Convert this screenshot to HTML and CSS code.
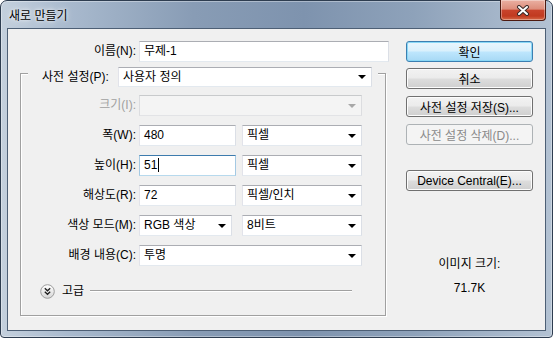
FILE: index.html
```html
<!DOCTYPE html>
<html lang="ko">
<head>
    <meta charset="utf-8">
    <title>새로 만들기</title>
    <link rel="stylesheet" href="styles.css">
</head>
<body>
    <div class="window">
        <div class="titlebar">
            <span class="title">새로 만들기</span>
            <button class="close-btn" aria-label="닫기">
                <svg width="14" height="11" viewBox="0 0 14 11">
                    <path d="M3 2 L11 9 M11 2 L3 9" stroke="#3a2a28" stroke-width="4" stroke-linecap="round" fill="none"/>
                    <path d="M3 2 L11 9 M11 2 L3 9" stroke="#fff" stroke-width="2" stroke-linecap="round" fill="none"/>
                </svg>
            </button>
        </div>

        <div class="client">
            <div class="form-area">
                <div class="name-row">
                    <label>이름(N):</label>
                    <div class="field">무제-1</div>
                </div>

                <div class="group">
                    <div class="preset-row">
                        <label>사전 설정(P):</label>
                        <div class="combo preset-combo"><span>사용자 정의</span><i class="arrow"></i></div>
                    </div>

                    <div class="grid">
                        <label class="disabled">크기(I):</label>
                        <div class="combo disabled"><span></span><i class="arrow"></i></div>

                        <label>폭(W):</label>
                        <div class="pair">
                            <div class="field num">480</div>
                            <div class="combo unit"><span>픽셀</span><i class="arrow"></i></div>
                        </div>

                        <label>높이(H):</label>
                        <div class="pair">
                            <div class="field num focused">51<span class="caret"></span></div>
                            <div class="combo unit"><span>픽셀</span><i class="arrow"></i></div>
                        </div>

                        <label>해상도(R):</label>
                        <div class="pair">
                            <div class="field num">72</div>
                            <div class="combo unit"><span>픽셀/인치</span><i class="arrow"></i></div>
                        </div>

                        <label>색상 모드(M):</label>
                        <div class="pair">
                            <div class="combo mode"><span>RGB 색상</span><i class="arrow"></i></div>
                            <div class="combo unit"><span>8비트</span><i class="arrow"></i></div>
                        </div>

                        <label>배경 내용(C):</label>
                        <div class="combo"><span>투명</span><i class="arrow"></i></div>
                    </div>

                    <div class="advanced">
                        <svg class="expand-icon" width="15" height="15" viewBox="0 0 15 15">
                            <defs>
                                <linearGradient id="btnGrad" x1="0" y1="0" x2="0" y2="1">
                                    <stop offset="0" stop-color="#ffffff"/>
                                    <stop offset="1" stop-color="#d6d6d6"/>
                                </linearGradient>
                            </defs>
                            <circle cx="7.5" cy="7.5" r="6.8" fill="url(#btnGrad)" stroke="#9c9c9c"/>
                            <path d="M4.8 4.3 L7.5 6.8 L10.2 4.3 M4.8 7.8 L7.5 10.3 L10.2 7.8" stroke="#1e1e1e" stroke-width="1.3" fill="none"/>
                        </svg>
                        <span class="advanced-label">고급</span>
                        <span class="etched-line"></span>
                    </div>
                </div>
            </div>

            <div class="side">
                <button class="btn default">확인</button>
                <button class="btn cancel">취소</button>
                <button class="btn save">사전 설정 저장(S)...</button>
                <button class="btn delete" disabled>사전 설정 삭제(D)...</button>
                <button class="btn device">Device Central(E)...</button>

                <div class="size-info">
                    <div>이미지 크기:</div>
                    <div class="size-value">71.7K</div>
                </div>
            </div>
        </div>
    </div>
</body>
</html>
```

FILE: styles.css
```css
* {
    box-sizing: border-box;
}
body {
    margin: 0;
    background: #fff;
    font-family: "Liberation Sans", "Noto Sans CJK KR", sans-serif;
    font-size: 12px;
    color: #000;
}
.window {
    width: 553px;
    height: 338px;
    display: flex;
    flex-direction: column;
    padding: 0 6px 6px 6px;
    border: 1px solid #2e3d50;
    border-radius: 7px 7px 4px 4px;
    background: linear-gradient(90deg, #c4d0dd 0%, #a9bace 12%, #889cb5 35%, #7e93ae 55%, #8ea2ba 75%, #b3c2d3 100%);
    box-shadow: inset 0 0 0 1px rgba(255,255,255,0.35);
}
.titlebar {
    height: 27px;
    flex: none;
    display: flex;
    align-items: flex-start;
    justify-content: space-between;
}
.title {
    margin: 8px 0 0 2px;
    line-height: 14px;
    text-shadow: 0 0 6px #fff, 0 0 3px rgba(255,255,255,0.8);
}
.close-btn {
    width: 46px;
    height: 21px;
    margin-top: -1px;
    padding: 0;
    display: flex;
    align-items: center;
    justify-content: center;
    border: 1px solid #4d1a10;
    border-top: none;
    border-radius: 0 0 4px 4px;
    background: linear-gradient(#eab0a2 0%, #dd8d7b 45%, #c8432b 52%, #c13a20 80%, #d66a48 100%);
    box-shadow: inset 0 0 0 1px rgba(255,255,255,0.35);
}
.client {
    flex: 1;
    display: flex;
    padding-top: 12px;
    border: 1px solid #4d5f75;
    background: #f0f0f0;
}
.form-area {
    width: 382px;
    flex: none;
}
label {
    text-align: right;
    line-height: 21px;
    white-space: nowrap;
}
label.disabled {
    color: #a0a0a0;
}
.name-row {
    display: grid;
    grid-template-columns: 128px 250px;
    column-gap: 3px;
    height: 21px;
}
.field,
.combo {
    height: 21px;
    line-height: 19px;
    background: #fff;
    border: 1px solid;
    border-color: #abadb3 #dbdfe6 #e3e9ef #e2e3ea;
    padding: 0 5px 0 4px;
    white-space: nowrap;
}
.field.focused {
    border-color: #3d7bad #a4c9e3 #b7d9ed #a4c9e3;
}
.caret {
    display: inline-block;
    width: 1px;
    height: 14px;
    margin-left: 1px;
    vertical-align: -3px;
    background: #000;
}
.combo {
    display: flex;
    align-items: center;
    justify-content: space-between;
}
.combo .arrow {
    width: 0;
    height: 0;
    border-left: 4px solid transparent;
    border-right: 4px solid transparent;
    border-top: 4px solid #000;
}
.combo.disabled {
    background: #f4f4f4;
    border-color: #c8cacc #dcdde0 #e2e3e6 #dcdde0;
}
.combo.disabled .arrow {
    border-top-color: #a8a8a8;
}
.group {
    width: 366px;
    height: 243px;
    margin: 11px 0 0 12px;
    border: 1px solid #a0a0a0;
    box-shadow: inset 1px 1px 0 #fff, 1px 1px 0 #fff;
}
.preset-row {
    width: 350px;
    height: 20px;
    margin: -7px 0 0 7px;
    padding: 0 6px 0 14px;
    display: flex;
    align-items: center;
    background: #f0f0f0;
}
.preset-row label {
    line-height: 20px;
}
.preset-combo {
    width: 254px;
    height: 20px;
    line-height: 18px;
    margin-left: auto;
}
.grid {
    display: grid;
    grid-template-columns: 115px 223px;
    grid-auto-rows: 21px;
    column-gap: 3px;
    row-gap: 9px;
    margin-top: 8px;
}
.pair {
    display: flex;
    justify-content: space-between;
}
.field.num {
    width: 97px;
}
.combo.mode {
    width: 93px;
}
.combo.unit {
    width: 120px;
}
.advanced {
    display: flex;
    align-items: center;
    height: 15px;
    margin: 18px 33px 0 19px;
}
.advanced-label {
    margin-left: 7px;
    line-height: 15px;
}
.etched-line {
    flex: 1;
    height: 2px;
    margin: 0 0 1px 6px;
    border-top: 1px solid #a0a0a0;
    border-bottom: 1px solid #fff;
}
.side {
    width: 127px;
    margin-left: 16px;
    display: flex;
    flex-direction: column;
}
.btn {
    height: 21px;
    padding: 0;
    font-family: inherit;
    font-size: 12px;
    color: #000;
    border: 1px solid #707070;
    border-radius: 3px;
    background: linear-gradient(#f2f2f2 0%, #ebebeb 48%, #dddddd 52%, #cfcfcf 100%);
    box-shadow: inset 0 0 0 1px #fcfcfc;
}
.btn.default {
    border-color: #3c7fb1;
    background: linear-gradient(#eaf6fd 0%, #d9f0fc 48%, #bee6fd 52%, #a7d9f5 100%);
    box-shadow: inset 0 0 0 1px #8ad8f6;
}
.btn.cancel {
    margin-top: 6px;
}
.btn.save {
    margin-top: 7px;
}
.btn.delete {
    margin-top: 7px;
    color: #8a8a8a;
    border-color: #adb2b5;
    background: #f4f4f4;
    box-shadow: none;
}
.btn.device {
    margin-top: 25px;
}
.size-info {
    margin-top: 65px;
    text-align: center;
    line-height: 16px;
}
.size-value {
    margin-top: 8px;
}
```
